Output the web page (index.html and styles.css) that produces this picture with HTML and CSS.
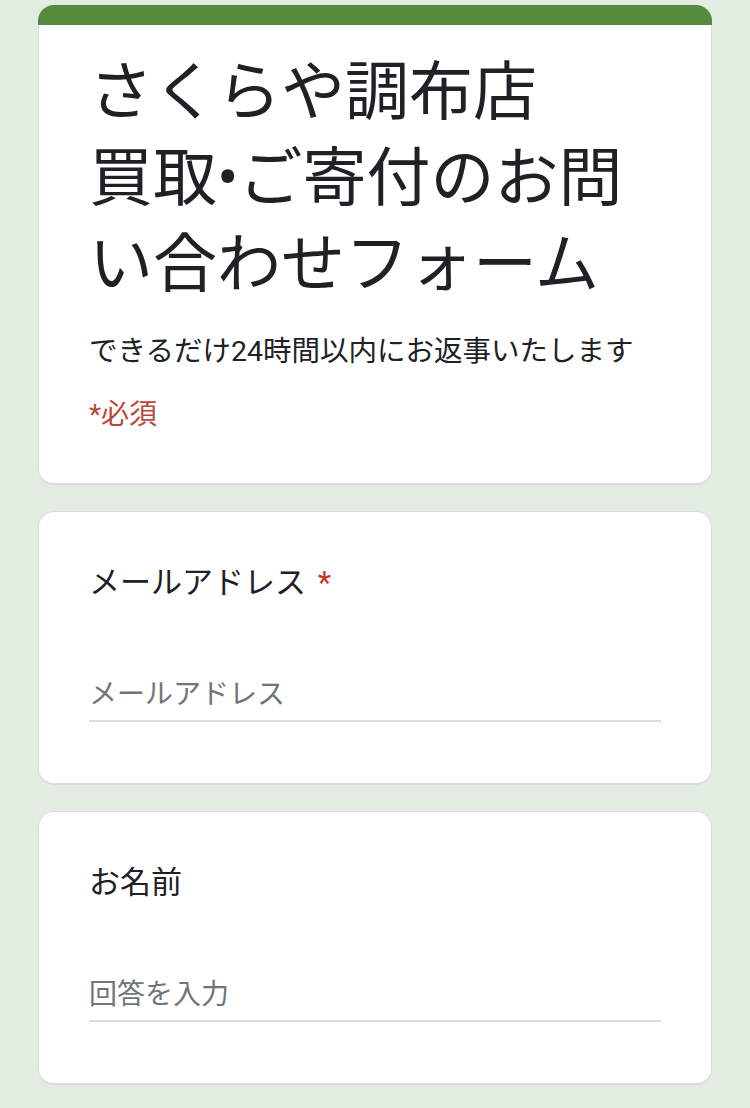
FILE: index.html
```html
<!DOCTYPE html>
<html lang="ja">
<head>
<meta charset="utf-8">
<title>さくらや調布店 買取•ご寄付のお問い合わせフォーム</title>
<link rel="stylesheet" href="styles.css">
</head>
<body>
<main class="form">
  <section class="card card-header">
    <div class="accent"></div>
    <h1 class="title">さくらや調布店<br>買取•ご寄付のお問い合わせフォーム</h1>
    <p class="desc">できるだけ24時間以内にお返事いたします</p>
    <p class="required-note">*必須</p>
  </section>
  <section class="card question">
    <div class="label">メールアドレス <span class="star">*</span></div>
    <div class="input">メールアドレス</div>
  </section>
  <section class="card question">
    <div class="label">お名前</div>
    <div class="input">回答を入力</div>
  </section>
</main>
</body>
</html>
```
FILE: styles.css
```css
* { box-sizing: border-box; }
html, body {
  margin: 0;
  padding: 0;
  background: #e3ece0;
}
body {
  font-family: Roboto, "Noto Sans CJK JP", sans-serif;
  color: #202124;
}
.form {
  width: 674px;
  margin: 5px auto 0;
  display: flex;
  flex-direction: column;
  gap: 26px;
}
.card {
  background: #ffffff;
  border: 1px solid #dadce0;
  border-bottom-width: 2px;
  border-radius: 16px;
  padding: 0 50px;
}
.card-header {
  border-top: 0;
  padding-bottom: 48px;
}
.accent {
  height: 20px;
  background: #558b3d;
  border-radius: 16px 16px 0 0;
  margin: 0 -51px 25px;
}
.title {
  margin: 0;
  font-weight: 400;
  font-size: 64px;
  line-height: 86px;
  letter-spacing: 0;
}
.desc {
  margin: 24px 0 0;
  font-size: 28.5px;
  line-height: 40px;
}
.required-note {
  margin: 23px 0 0;
  font-size: 28px;
  line-height: 40px;
  color: #b9473a;
}
.question {
  padding-top: 47px;
  padding-bottom: 61px;
}
.label {
  font-size: 31px;
  line-height: 48px;
}
.star {
  color: #c5362a;
  margin-left: 4px;
}
.input {
  margin-top: 56px;
  height: 59px;
  display: flex;
  align-items: center;
  font-size: 28px;
  color: #70757a;
  border-bottom: 2px solid #dadce0;
}
```
